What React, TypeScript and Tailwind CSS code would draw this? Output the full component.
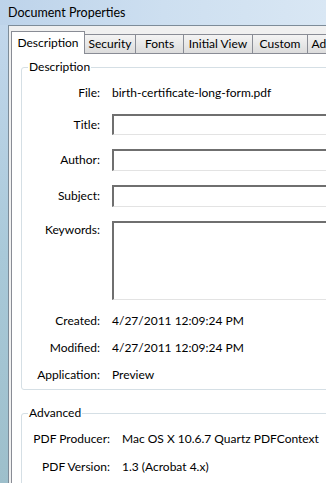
const font = { fontFamily: "Lato, 'Open Sans', sans-serif" };

const tabs = [
	{ label: "Security", w: "w-[51px]" },
	{ label: "Fonts", w: "w-[48px]" },
	{ label: "Initial View", w: "w-[69px]" },
	{ label: "Custom", w: "w-[55px]" },
	{ label: "Advanced", w: "w-[60px]" },
];

function Field({ h }: { h: string }) {
	return (
		<div
			className={`${h} flex-1 bg-white border-t-2 border-l-2 border-b border-t-[#6f6f6f] border-l-[#6f6f6f] border-b-[#e3e3e3]`}
		/>
	);
}

function Row({
	label,
	children,
	cls,
	labelCls = "w-[78px]",
}: {
	label: string;
	children: React.ReactNode;
	cls: string;
	labelCls?: string;
}) {
	return (
		<div className={`flex items-center ${cls}`}>
			<div className={`${labelCls} shrink-0 text-right`}>{label}</div>
			<div className="ml-[12px] flex flex-1 items-center">{children}</div>
		</div>
	);
}

export default function App() {
	return (
		<div
			className="relative w-[326px] h-[483px] overflow-hidden text-[12px] leading-[16px] text-black bg-[#c3d8ec]"
			style={font}
		>
			{/* title bar */}
			<div className="h-[25px] flex items-center pl-[8px] bg-gradient-to-r from-[#bdd3ea] via-[#cddff0] to-[#d9e7f4]">
				<span className="text-[12.5px]">Document Properties</span>
			</div>

			<div className="flex h-[458px]">
				{/* left glass frame */}
				<div className="w-[8px] shrink-0 bg-gradient-to-b from-[#c2d7ec] via-[#a9c9d9] to-[#9dbfcb]" />

				{/* client area */}
				<div className="w-[360px] shrink-0 border-l border-t border-[#7d8c99] bg-[#f0f0f0] pl-[2px] pt-[5px]">
					{/* tab strip */}
					<div className="flex items-end h-[22px]">
						<div className="relative z-10 w-[76px] h-[23px] mb-[-1px] flex items-center justify-center bg-white border border-b-0 border-[#898c95]">
							Description
						</div>
						{tabs.map((t) => (
							<div
								key={t.label}
								className={`${t.w} h-[19px] shrink-0 flex items-center justify-center border-t border-r border-[#898c95] bg-gradient-to-b from-[#f4f4f4] to-[#dcdcdc]`}
							>
								{t.label}
							</div>
						))}
					</div>

					{/* tab panel */}
					<div className="h-[440px] border-l border-t border-[#898c95] bg-white pl-[9px] pt-[5px]">
						<fieldset className="border border-[#d5dfe5] rounded-[3px] pb-[4px]">
							<legend className="ml-[6px] px-[1px]">Description</legend>
							<Row label="File:" cls="h-[20px] mt-[8px]">
								birth-certificate-long-form.pdf
							</Row>
							<Row label="Title:" cls="h-[21px] mt-[11px]">
								<Field h="h-[21px]" />
							</Row>
							<Row label="Author:" cls="h-[22px] mt-[14px]">
								<Field h="h-[22px]" />
							</Row>
							<Row label="Subject:" cls="h-[22px] mt-[14px]">
								<Field h="h-[22px]" />
							</Row>
							<div className="flex mt-[14px]">
								<div className="w-[78px] shrink-0 text-right pt-[1px]">Keywords:</div>
								<div className="ml-[12px] flex flex-1">
									<Field h="h-[79px]" />
								</div>
							</div>
							<Row label="Created:" cls="h-[20px] mt-[11px]">
								4/27/2011 12:09:24 PM
							</Row>
							<Row label="Modified:" cls="h-[20px] mt-[7px]">
								4/27/2011 12:09:24 PM
							</Row>
							<Row label="Application:" cls="h-[20px] mt-[7px]">
								Preview
							</Row>
						</fieldset>

						<fieldset className="mt-[15px] h-[120px] border border-[#d5dfe5] rounded-[3px]">
							<legend className="ml-[6px] px-[1px]">Advanced</legend>
							<Row label="PDF Producer:" labelCls="w-[88px]" cls="h-[20px] mt-[8px]">
								Mac OS X 10.6.7 Quartz PDFContext
							</Row>
							<Row label="PDF Version:" labelCls="w-[88px]" cls="h-[20px] mt-[8px]">
								1.3 (Acrobat 4.x)
							</Row>
						</fieldset>
					</div>
				</div>
			</div>
		</div>
	);
}
